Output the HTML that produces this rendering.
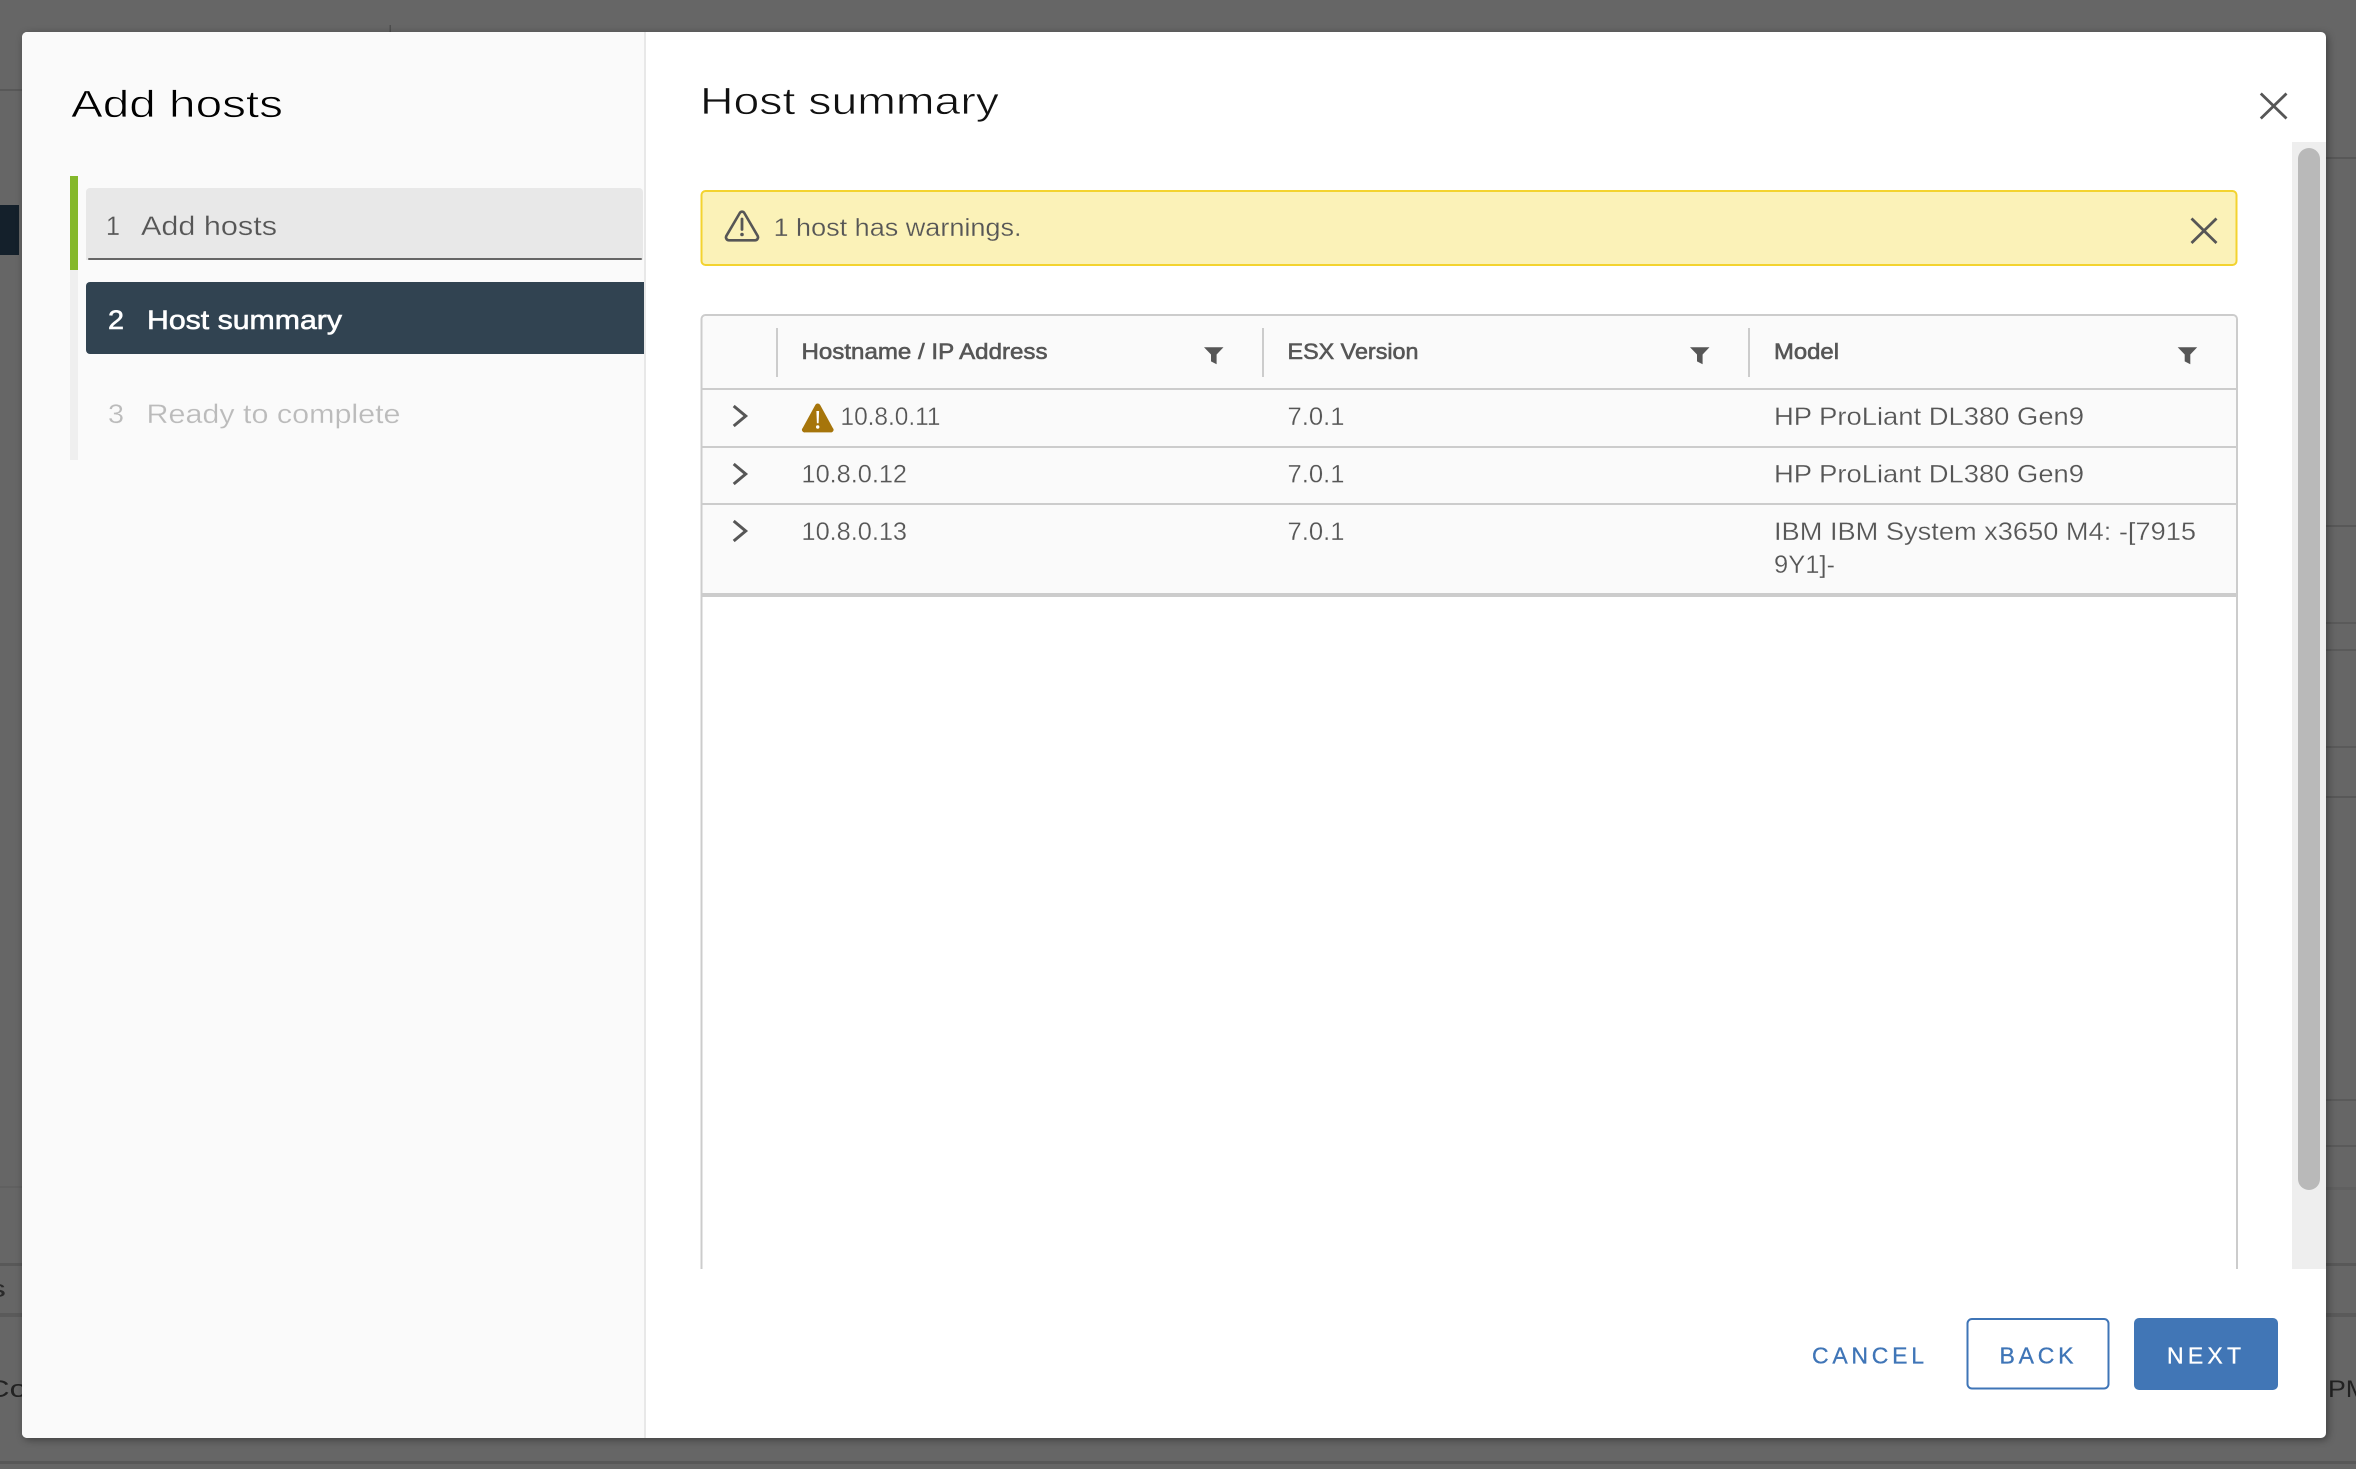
<!DOCTYPE html>
<html lang="en">
<head>
<meta charset="utf-8">
<title>Add hosts</title>
<style>
html,body{margin:0;padding:0;background:#666;width:2356px;height:1469px;overflow:hidden}
svg{display:block}
text{font-family:"Liberation Sans",sans-serif;white-space:pre}
.t{fill:#565656;font-size:25px;stroke:#fafafa;stroke-width:.25px}
.a{fill:#565656;font-size:25px;stroke:#fbf2b8;stroke-width:.25px}
.h{fill:#565656;font-size:22px;stroke:#565656;stroke-width:.6px}
.ln{fill:#565656}
.tl{fill:#ccc}
</style>
</head>
<body>
<svg width="2356" height="1469" viewBox="0 0 2356 1469" xmlns="http://www.w3.org/2000/svg">
  <!-- dimmed background page -->
  <rect width="2356" height="1469" fill="#666"/>
  <rect x="0" y="89" width="22" height="2" fill="#585858"/>
  <rect x="0" y="205" width="19" height="50" fill="#14202b"/>
  <rect x="389.5" y="25" width="1.5" height="8" fill="#4e4e4e"/>
  <rect x="0" y="1186" width="22" height="2" fill="#606060"/>
  <rect x="0" y="1263" width="22" height="3" fill="#585858"/>
  <rect x="0" y="1313" width="22" height="4" fill="#5a5a5a"/>
  <rect x="2326" y="157" width="30" height="2" fill="#585858"/>
  <rect x="2326" y="525" width="30" height="2" fill="#585858"/>
  <rect x="2326" y="622" width="30" height="2" fill="#5a5a5a"/>
  <rect x="2326" y="649" width="30" height="2" fill="#5a5a5a"/>
  <rect x="2326" y="746" width="30" height="2" fill="#5a5a5a"/>
  <rect x="2326" y="796" width="30" height="2" fill="#585858"/>
  <rect x="2326" y="1099" width="30" height="2" fill="#5a5a5a"/>
  <rect x="2326" y="1145" width="30" height="2" fill="#5a5a5a"/>
  <rect x="2326" y="1187" width="30" height="3" fill="#606060"/>
  <rect x="2326" y="1263" width="30" height="3" fill="#585858"/>
  <rect x="2326" y="1313" width="30" height="4" fill="#5a5a5a"/>
  <rect x="0" y="1461" width="2356" height="3" fill="#585858"/>
  <text x="-12" y="1297" font-size="24" fill="#2a2a2a" textLength="18" lengthAdjust="spacingAndGlyphs">s</text>
  <text x="-13" y="1397" font-size="24" fill="#222" textLength="40" lengthAdjust="spacingAndGlyphs">Co</text>
  <text x="2328" y="1397" font-size="24" fill="#222" textLength="40" lengthAdjust="spacingAndGlyphs">PM</text>

  <!-- modal -->
  <rect x="22" y="32" width="2304" height="1406" rx="5" fill="#fff" style="filter:drop-shadow(2px 2px 4px rgba(0,0,0,.38))"/>
  <path d="M644 32H27a5 5 0 0 0-5 5V1433a5 5 0 0 0 5 5H644Z" fill="#fafafa"/>
  <rect x="644" y="32" width="2" height="1406" fill="#e8e8e8"/>

  <!-- sidebar -->
  <text x="71" y="117" font-size="38" fill="#000" stroke="#fafafa" stroke-width=".7" textLength="212" lengthAdjust="spacingAndGlyphs">Add hosts</text>
  <rect x="70" y="176" width="8" height="284" fill="#efefef"/>
  <rect x="70" y="176" width="8" height="94" fill="#84b82b"/>

  <path d="M90 188H639a4 4 0 0 1 4 4V260H86V192a4 4 0 0 1 4-4Z" fill="#e8e8e8"/>
  <rect x="88" y="258" width="554" height="2" rx="1" fill="#666"/>
  <text x="106" y="235" font-size="27" fill="#565656" stroke="#e8e8e8" stroke-width=".25" textLength="14" lengthAdjust="spacingAndGlyphs">1</text>
  <text x="141" y="235" font-size="27" fill="#565656" stroke="#e8e8e8" stroke-width=".25" textLength="136" lengthAdjust="spacingAndGlyphs">Add hosts</text>

  <path d="M90 282H644V354H90a4 4 0 0 1-4-4V286a4 4 0 0 1 4-4Z" fill="#314351"/>
  <text x="108" y="329" font-size="27" fill="#fff" stroke="#fff" stroke-width=".6" textLength="16" lengthAdjust="spacingAndGlyphs">2</text>
  <text x="147" y="329" font-size="27" fill="#fff" stroke="#fff" stroke-width=".6" textLength="195" lengthAdjust="spacingAndGlyphs">Host summary</text>

  <text x="108" y="423" font-size="27" fill="#bbb" stroke="#fafafa" stroke-width=".25" textLength="16" lengthAdjust="spacingAndGlyphs">3</text>
  <text x="146.5" y="423" font-size="27" fill="#bbb" stroke="#fafafa" stroke-width=".25" textLength="254" lengthAdjust="spacingAndGlyphs">Ready to complete</text>

  <!-- main header -->
  <text x="700" y="114" font-size="38" fill="#111" stroke="#fff" stroke-width=".7" textLength="299" lengthAdjust="spacingAndGlyphs">Host summary</text>
  <path d="M2260.8 93.5L2286.5 118.5M2286.5 93.5L2260.8 118.5" stroke="#565656" stroke-width="2.8" fill="none"/>

  <!-- scrollbar -->
  <rect x="2292" y="142" width="34" height="1127" fill="#eeeeee"/>
  <rect x="2298" y="148" width="22" height="1042" rx="11" fill="#b9b9b9"/>

  <!-- alert -->
  <rect x="701.5" y="191" width="1535" height="74" rx="4" fill="#fbf2b8" stroke="#f3d32f" stroke-width="2"/>
  <path d="M739.8 213a2.6 2.6 0 0 1 4.5 0L757.6 235.8a3 3 0 0 1-2.6 4.5H729a3 3 0 0 1-2.6-4.5Z" fill="none" stroke="#565656" stroke-width="2.6" stroke-linejoin="round"/>
  <path d="M742 219V229.5" stroke="#565656" stroke-width="2.8" stroke-linecap="round"/>
  <circle cx="742" cy="234.5" r="1.8" fill="#565656"/>
  <text class="a" x="773.5" y="236" textLength="248" lengthAdjust="spacingAndGlyphs">1 host has warnings.</text>
  <path d="M2191.5 218.5L2216.5 243M2216.5 218.5L2191.5 243" stroke="#565656" stroke-width="2.8" fill="none"/>

  <!-- table -->
  <path d="M701.5 1269V319a4 4 0 0 1 4-4H2233a4 4 0 0 1 4 4V1269" fill="#fff" stroke="#ccc" stroke-width="2"/>
  <path d="M702.5 593V320a4 4 0 0 1 4-4H2232a4 4 0 0 1 4 4V593Z" fill="#fafafa"/>
  <rect class="tl" x="776" y="328" width="2" height="49"/>
  <rect class="tl" x="1262" y="328" width="2" height="49"/>
  <rect class="tl" x="1748" y="328" width="2" height="49"/>
  <rect class="tl" x="702" y="388" width="1534" height="2"/>
  <rect class="tl" x="702" y="446" width="1534" height="2"/>
  <rect class="tl" x="702" y="503" width="1534" height="2"/>
  <rect class="tl" x="702" y="593" width="1534" height="4"/>

  <text class="h" x="801.5" y="359" textLength="246" lengthAdjust="spacingAndGlyphs">Hostname / IP Address</text>
  <text class="h" x="1287.5" y="359" textLength="131" lengthAdjust="spacingAndGlyphs">ESX Version</text>
  <text class="h" x="1774" y="359" textLength="65" lengthAdjust="spacingAndGlyphs">Model</text>

  <path class="ln" d="M1204 347.2H1223.5L1216.6 354.5V364.3L1211 361.4V354.5Z"/>
  <path class="ln" transform="translate(486 0)" d="M1204 347.2H1223.5L1216.6 354.5V364.3L1211 361.4V354.5Z"/>
  <path class="ln" transform="translate(973.7 0)" d="M1204 347.2H1223.5L1216.6 354.5V364.3L1211 361.4V354.5Z"/>

  <!-- rows -->
  <path d="M733.7 406L745.7 416L733.7 426" fill="none" stroke="#565656" stroke-width="3"/>
  <path d="M733.7 464L745.7 474L733.7 484" fill="none" stroke="#565656" stroke-width="3"/>
  <path d="M733.7 521L745.7 531L733.7 541" fill="none" stroke="#565656" stroke-width="3"/>

  <path d="M815.3 405a2.8 2.8 0 0 1 4.9 0L832.8 428a2.6 2.6 0 0 1-2.3 4.4H805a2.6 2.6 0 0 1-2.3-4.4Z" fill="#a6750b"/>
  <path d="M816.4 411h2.7l-.5 12.3h-1.7Z" fill="#fff"/>
  <circle cx="817.7" cy="427" r="1.7" fill="#fff"/>

  <text class="t" x="840.5" y="425" textLength="100" lengthAdjust="spacingAndGlyphs">10.8.0.11</text>
  <text class="t" x="801.5" y="482.5" textLength="105.5" lengthAdjust="spacingAndGlyphs">10.8.0.12</text>
  <text class="t" x="801.5" y="540" textLength="105.5" lengthAdjust="spacingAndGlyphs">10.8.0.13</text>
  <text class="t" x="1287.5" y="425" textLength="57" lengthAdjust="spacingAndGlyphs">7.0.1</text>
  <text class="t" x="1287.5" y="482.5" textLength="57" lengthAdjust="spacingAndGlyphs">7.0.1</text>
  <text class="t" x="1287.5" y="540" textLength="57" lengthAdjust="spacingAndGlyphs">7.0.1</text>
  <text class="t" x="1774" y="425" textLength="310" lengthAdjust="spacingAndGlyphs">HP ProLiant DL380 Gen9</text>
  <text class="t" x="1774" y="482.5" textLength="310" lengthAdjust="spacingAndGlyphs">HP ProLiant DL380 Gen9</text>
  <text class="t" x="1774" y="540" textLength="422" lengthAdjust="spacingAndGlyphs">IBM IBM System x3650 M4: -[7915</text>
  <text class="t" x="1774" y="573" textLength="61" lengthAdjust="spacingAndGlyphs">9Y1]-</text>

  <!-- footer buttons -->
  <text x="1812" y="1363.5" font-size="23" fill="#3f75b7" stroke="#3f75b7" stroke-width=".3" textLength="112" lengthAdjust="spacing">CANCEL</text>
  <rect x="1967.5" y="1319" width="141" height="69.5" rx="4.5" fill="#fff" stroke="#3f75b7" stroke-width="2"/>
  <text x="1999.5" y="1363.5" font-size="23" fill="#3f75b7" stroke="#3f75b7" stroke-width=".3" textLength="74" lengthAdjust="spacing">BACK</text>
  <rect x="2134" y="1318" width="144" height="72" rx="5" fill="#4176b6"/>
  <text x="2167" y="1363.5" font-size="23" fill="#fff" stroke="#fff" stroke-width=".3" textLength="74" lengthAdjust="spacing">NEXT</text>
</svg>
</body>
</html>
